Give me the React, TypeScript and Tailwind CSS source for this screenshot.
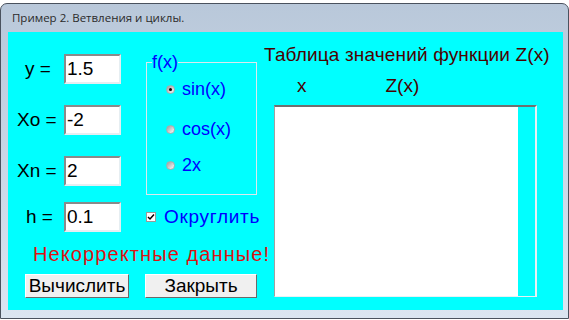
import React from "react";

const F = { fontFamily: '"Liberation Sans", Arial, sans-serif' };

function Field({ label, value, lpad, mt }: { label: string; value: string; lpad: string; mt: string }) {
  return (
    <div className={`flex items-center ${mt}`}>
      <div className={`w-[56px] ${lpad} text-[19px] leading-[22px] text-black whitespace-nowrap`}>{label}</div>
      <div className="w-[57px] h-[30px] bg-white border-2 border-t-[#8a8a8a] border-l-[#8a8a8a] border-b-[#e6eef2] border-r-[#e6eef2] flex items-center pl-[1px] text-[19px] text-black">
        {value}
      </div>
    </div>
  );
}

function Radio({ label, checked, mt }: { label: string; checked?: boolean; mt: string }) {
  return (
    <div className={`flex items-center ${mt}`}>
      <div className="ml-[19px] w-[9px] h-[9px] rounded-full bg-gradient-to-br from-[#9c9c9c] to-[#ffffff] border border-[#acacac] flex items-center justify-center">
        {checked && <div className="w-[3px] h-[3px] rounded-full bg-black" />}
      </div>
      <span className="ml-[7px] text-[18px] leading-[22px] text-[#0000ff]">{label}</span>
    </div>
  );
}

export default function App() {
  return (
    <div className="w-[569px] h-[320px] bg-white pt-[3px] overflow-hidden" style={F}>
      <div className="h-[316px] border border-[#4a525e] rounded-t-[7px] bg-gradient-to-b from-[#b9c8da] to-[#dbe5f1] flex flex-col pl-[7px] pr-[5px] pb-[8px]">
        <div className="h-[28px] flex items-center pl-[4px] text-[11.5px] text-[#2a2a2a]" style={{ fontFamily: '"Open Sans", "Noto Sans", sans-serif' }}>
          Пример 2. Ветвления и циклы.
        </div>
        <div className="flex-1 bg-[#00ffff] flex">
          <div className="w-[256px] flex flex-col">
            <div className="flex">
              <div className="w-[138px] flex flex-col">
                <Field label="y =" value="1.5" lpad="pl-[17px]" mt="mt-[22px]" />
                <Field label="Xo =" value="-2" lpad="pl-[9px]" mt="mt-[21px]" />
                <Field label="Xn =" value="2" lpad="pl-[9px]" mt="mt-[21px]" />
                <Field label="h =" value="0.1" lpad="pl-[18px]" mt="mt-[16px]" />
              </div>
              <div className="flex flex-col">
                <fieldset className="mt-[19px] w-[111px] h-[144px] border border-[#dce8ee] px-0 pt-0">
                  <legend className="ml-[5px] px-0 text-[18px] leading-[22px] text-[#0000ff]">f(x)</legend>
                  <Radio label="sin(x)" checked mt="mt-[5px]" />
                  <Radio label="cos(x)" mt="mt-[18px]" />
                  <Radio label="2x" mt="mt-[14px]" />
                </fieldset>
                <div className="flex items-center mt-[11px]">
                  <div className="w-[10px] h-[10px] bg-white border border-[#9a9a9a] flex items-center justify-center">
                    <svg width="8" height="8" viewBox="0 0 8 8">
                      <path d="M1 4 L3 6 L7 1.5" stroke="#000" strokeWidth="1.5" fill="none" />
                    </svg>
                  </div>
                  <span className="ml-[8px] text-[19px] leading-[22px] text-[#0000ff] tracking-[0.7px]">Округлить</span>
                </div>
              </div>
            </div>
            <div className="mt-[11px] pl-[25px] text-[20px] leading-[22px] text-[#dd1111] whitespace-nowrap tracking-[1.1px]">
              Некорректные данные!
            </div>
            <div className="flex mt-[9px]">
              <div className="ml-[17px] w-[104px] h-[24px] bg-[#f0f0f0] border border-t-white border-l-white border-b-[#6a6a6a] border-r-[#6a6a6a] flex items-center justify-center text-[19px] text-black">
                Вычислить
              </div>
              <div className="ml-[16px] w-[112px] h-[24px] bg-[#f0f0f0] border border-t-white border-l-white border-b-[#6a6a6a] border-r-[#6a6a6a] flex items-center justify-center text-[19px] text-black">
                Закрыть
              </div>
            </div>
          </div>
          <div className="flex flex-col">
            <div className="mt-[12px] text-[19px] leading-[22px] text-[#4a0000] whitespace-nowrap tracking-[0.15px]">Таблица значений функции Z(x)</div>
            <div className="mt-[9px] flex text-[19px] leading-[22px] text-[#4a0000]">
              <span className="ml-[33px]">x</span>
              <span className="ml-[79px]">Z(x)</span>
            </div>
            <div className="mt-[8px] ml-[10px] w-[263px] h-[192px] border-t-2 border-l border-t-[#6f6f6f] border-l-[#a0a0a0] border-r-2 border-b border-r-[#e8f0f4] border-b-[#e8f0f4] flex">
              <div className="flex-1 bg-white" />
              <div className="w-[17px] bg-[#00ffff]" />
            </div>
          </div>
        </div>
      </div>
    </div>
  );
}
